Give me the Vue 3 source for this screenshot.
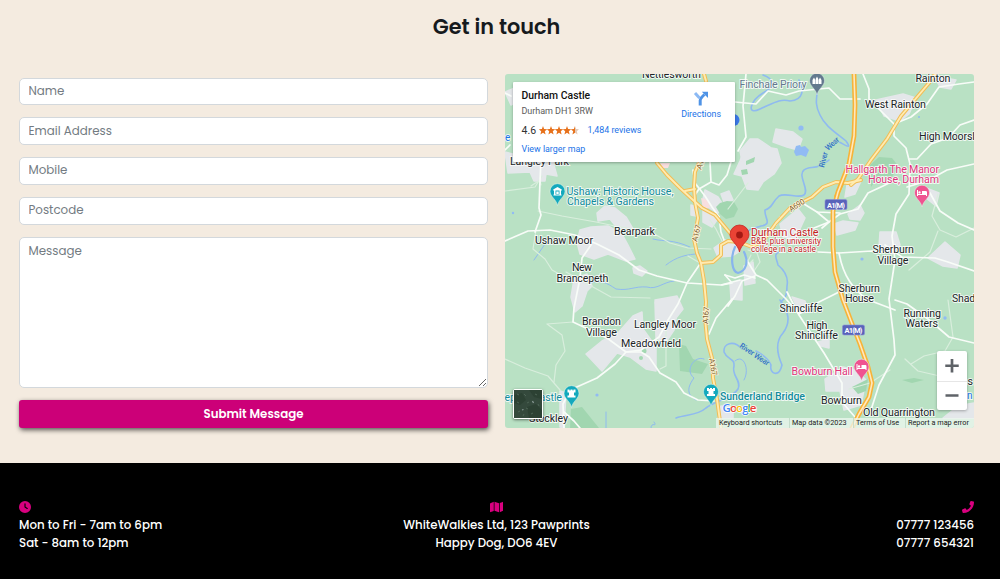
<script setup>
const fields = ['Name', 'Email Address', 'Mobile', 'Postcode']

const towns = [
  '505,152 520,156 552,158 557,176 546,174 545,181 534,181 530,172 508,173',
  '580,230 591,227 608,226 622,234 628,245 635,259 626,261 608,254 594,259 580,254 577,242',
  '597,213 605,206 615,208 626,217 633,229 618,229 610,219 598,221',
  '633,268 640,266 647,271 642,276 634,273',
  '574,279 587,274 592,286 587,291 582,306 575,312 571,297',
  '586,354 602,341 618,333 633,316 642,312 643,329 656,347 656,371 646,369 630,357 617,353 602,371',
  '655,302 670,300 677,313 674,330 666,342 656,338',
  '655,300 677,296 683,309 672,323 658,319',
  '703,210 712,212 719,217 712,227 703,222',
  '705,190 718,197 725,208 718,213 708,207 703,199',
  '721,194 729,191 733,200 724,202',
  '714,248 725,240 737,246 740,251 732,256 718,257',
  '744,150 761,146 777,149 781,163 774,174 763,182 758,190 747,189 742,176 734,174 740,161',
  '740,151 750,139 758,139 770,147 770,158 758,166 743,166',
  '776,129 793,132 802,139 798,150 787,147 773,142',
  '780,224 798,209 805,218 799,231 796,240 783,237',
  '834,224 843,221 858,223 855,230 837,235',
  '848,214 860,205 864,213 860,220 850,219',
  '847,185 861,181 855,194 845,197',
  '876,100 903,94 916,98 909,114 900,121 884,116',
  '880,232 896,232 900,245 892,254 879,247',
  '928,258 945,242 960,255 957,268 943,266',
  '934,76 956,80 951,89 940,87',
  '926,188 939,193 936,206 926,198',
  '744,266 753,262 755,283 745,285',
  '730,284 742,280 742,300 731,299',
  '792,297 805,301 809,312 800,313',
  '818,342 829,339 829,348 821,346',
  '825,379 843,367 856,370 866,380 861,405 844,410 840,391 826,391',
  '721,406 733,407 733,418 718,418',
  '560,391 566,393 564,428 560,427',
  '943,418 958,406 974,403 974,418',
  '505,92 517,87 525,96 511,105',
  '691,205 696,207 696,216 691,215',
]

const pinkAreas = ['701,198 708,200 710,208 703,209', '660,163 670,163 668,168 663,168']

const parks = [
  '720,203 727,201 734,202 738,209 734,217 726,219 720,214 716,207',
  '870,165 879,157 892,158 899,167 891,178 879,176 871,187',
  '571,409 582,407 599,428 570,428',
  '679,344 686,346 693,359 708,364 702,374 680,371',
  '902,380 914,378 924,380 912,383',
  '852,387 868,379 866,391 858,394',
  '746,161 755,157 754,162 746,165',
  '741,170 747,169 748,174 742,175',
]

const streams = [
  'M763,75C774,79 776,86 763,93C750,101 746,116 760,109C772,104 780,98 790,101C804,100 804,89 799,80',
  'M818,86C817,98 814,103 820,115C825,126 835,132 846,141C853,151 844,144 839,142',
  'M829,160C817,171 810,165 804,170C797,175 810,190 804,195C798,199 786,192 779,196C771,203 773,208 765,210C764,218 773,224 761,226C756,228 750,228 747,232',
  'M779,252C773,254 777,260 778,265C784,270 789,276 787,286C787,294 786,298 781,302',
  'M780,300C789,312 791,322 783,333C774,343 778,356 782,365C779,378 769,374 771,365C768,357 761,354 756,351',
  'M742,349C733,339 723,344 724,352C727,360 735,358 734,366C731,376 742,380 738,389C733,398 715,401 706,408C697,416 686,414 676,418',
  'M704,359C695,355 684,370 694,378C685,390 689,396 696,400',
  'M651,428C651,421 658,428 654,422M606,428V412',
  'M590,283C600,279 607,283 616,289C630,291 634,286 647,287C657,290 663,282 674,281',
  'M653,239C665,242 672,239 690,247M666,265C676,257 687,254 699,254',
  'M534,260L545,244M735,361C744,353 750,370 744,380',
]

const lanes = [
  'M505,191L535,187L542,176M531,186L540,180L541,185M538,211L562,216L596,222L615,226L651,232L670,243L688,248L711,249',
  'M536,230L533,249L545,259L552,270L570,280M566,272L611,297L650,298',
  'M547,324L573,322M547,324L562,335L565,351L556,365L554,382',
  'M505,359L525,368L548,376L560,390M666,322L666,366L660,369M710,220L716,229L722,241M728,209L748,183',
  'M938,194L932,216L940,230L956,237L974,228M938,231L930,252L909,270M948,300L950,315L953,337L945,351L924,356L911,364',
  'M849,389L870,383L890,370M905,359L918,371L944,377L974,385',
  'M748,250L757,253L760,262L754,271L747,263L751,255M753,260L745,268M700,263L688,256',
]

const roads = [
  'M505,93L511,96M505,150L510,145M541,160L540,181L539,208L541,215L535,232',
  'M505,241L528,231L550,230L575,235L597,244L619,255L639,270L657,276L687,283L721,285L740,280',
  'M591,245L582,258L580,278L574,308L573,322L607,338L626,352L641,352L649,357L660,373L676,382L684,393L698,400L714,401',
  'M700,264L687,283L678,304L668,320L659,337L641,350L626,352L615,364L597,378L570,390L563,404L564,428',
  'M564,412L574,421L580,428M732,299L716,318L709,334',
  'M710,162L711,182L699,189L693,198M711,182L719,185L727,175L731,162',
  'M693,170L695,183L705,196L712,207L719,217',
  'M719,217L721,232L724,240M755,278L744,275L735,278L725,275',
  'M746,74L743,106L746,137L738,151M735,102L756,104L768,91L786,95L799,91L829,88L840,99L860,99',
  'M863,74L869,89L869,99L884,114L894,124L894,136L906,148L910,164L909,194L896,214L892,236L895,260L889,299L894,340L895,355L879,385L869,416',
  'M894,124L911,117L927,104L939,87L959,84L974,82M909,159L917,159L931,144L948,138L960,125L974,120M907,187L927,181L947,170L974,164',
  'M930,193L940,211L958,223L974,230M885,245L902,257L935,258L948,262L974,271M818,252L839,253L872,251L885,252',
  'M746,259L756,275L767,280L786,299L799,314L813,305L839,292M839,253C844,280 855,289 866,299L895,310',
  'M787,292L799,315L824,353L842,383L842,402L855,417M814,228L829,222L840,214L858,209L868,193L883,186L891,182',
  'M804,204L817,212L840,213M895,300L907,304L928,319L949,337L974,343',
  'M755,276L742,281L735,296L728,306M725,275L732,283L722,285M780,217L776,225M817,212L829,222L822,228',
]

const yellowRoads = [
  'M657,163L667,175L680,188L693,200L702,208L715,215L730,233L738,241',
  'M701,158L695,172L694,187L695,202L698,218L694,239L697,253L701,263L704,281L706,302L705,318L707,339L712,358L713,378L717,399L719,414L721,428',
  'M701,263L713,262L721,255L721,245L728,241L739,242L752,247L764,240L776,223L790,208L812,197L823,187L836,182L848,183L861,180',
  'M704,74L706,81M685,191L695,189M842,184L836,196',
  'M935,74L929,83L901,116L887,139L871,160L858,179L851,185',
]

const motorway = 'M854,74L855,105L854,136L849,164L838,192L833,211L833,247L835,272L843,300L851,321L860,344L868,367L872,383L869,397L859,414L852,428'

const labels = [
  { t: 'Nettlesworth', x: 642, y: 78, w: 59 },
  { t: 'Langley Park', x: 510, y: 165, w: 59 },
  { t: 'Rainton', x: 915.5, y: 82, w: 35 },
  { t: 'West Rainton', x: 865, y: 108, w: 61 },
  { t: 'High Moorsley', x: 919, y: 140, w: 66 },
  { t: 'Bearpark', x: 614, y: 235, w: 41 },
  { t: 'Ushaw Moor', x: 535, y: 244, w: 58 },
  { t: 'New', x: 572, y: 271, w: 20 },
  { t: 'Brancepeth', x: 556.5, y: 282, w: 52 },
  { t: 'Brandon', x: 582, y: 325, w: 39 },
  { t: 'Village', x: 586, y: 335.5, w: 31 },
  { t: 'Langley Moor', x: 634, y: 328, w: 62 },
  { t: 'Meadowfield', x: 621, y: 347, w: 60 },
  { t: 'Sherburn', x: 872.5, y: 253, w: 41.5 },
  { t: 'Village', x: 877.5, y: 263.5, w: 31 },
  { t: 'Sherburn', x: 838.5, y: 291.5, w: 41.5 },
  { t: 'House', x: 845, y: 301.5, w: 29 },
  { t: 'Shadforth', x: 952, y: 301.5, w: 45 },
  { t: 'Shincliffe', x: 779.5, y: 312, w: 43 },
  { t: 'High', x: 806.5, y: 328.5, w: 21 },
  { t: 'Shincliffe', x: 795, y: 339, w: 43 },
  { t: 'Running', x: 903.5, y: 317, w: 37.5 },
  { t: 'Waters', x: 905.5, y: 327, w: 32.5 },
  { t: 'Bowburn', x: 821, y: 403.5, w: 41 },
  { t: 'Old Quarrington', x: 863, y: 416, w: 72 },
  { t: 'Stockley', x: 529, y: 422, w: 39 },
  { t: 'Cass', x: 949, y: 385, w: 24 },
  { t: 'Finchale Priory', x: 739.5, y: 87.5, w: 67, c: 'grey' },
  { t: 'Ushaw: Historic House,', x: 566.5, y: 194.5, w: 107, c: 'teal' },
  { t: 'Chapels & Gardens', x: 567, y: 204.5, w: 87, c: 'teal' },
  { t: 'Brancepeth Castle', x: 478, y: 401, w: 84, c: 'teal' },
  { t: 'Sunderland Bridge', x: 720, y: 400, w: 85, c: 'teal strong' },
  { t: 'Hallgarth The Manor', x: 845.5, y: 173, w: 93.5, c: 'pink' },
  { t: 'House, Durham', x: 868, y: 183, w: 71, c: 'pink' },
  { t: 'Bowburn Hall', x: 791.5, y: 374.5, w: 61, c: 'pink' },
  { t: 'Durham Castle', x: 751, y: 235.5, w: 67.5, c: 'red' },
  { t: 'B&B, plus university', x: 751, y: 243.5, w: 70, c: 'red small' },
  { t: 'college in a castle', x: 751, y: 251.5, w: 65, c: 'red small' },
]

const pins = [
  { x: 817, y: 81, color: '#63798e', icon: 'priory' },
  { x: 557.5, y: 191.5, color: '#13a9bd', icon: 'museum' },
  { x: 571.5, y: 393.5, color: '#13a9bd', icon: 'tower' },
  { x: 711, y: 392, color: '#13a9bd', icon: 'tower' },
  { x: 922, y: 193, color: '#ef5390', icon: 'bed' },
  { x: 861.5, y: 367, color: '#ef5390', icon: 'bed' },
]

const glyphs = {
  priory: 'M-4.5,3V-1L-3,-3.500L-1.700,-1V3ZM1.700,3V-1L3,-3.500L4.500,-1V3ZM-1.300,3V-2L0,-4.500L1.300,-2V3Z',
  museum: 'M-4.3,-2L0,-4.5L4.3,-2V-1H-4.3ZM-3.5,-1H-2V3H-3.5ZM2,-1H3.5V3H2ZM-4,3H4V4H-4ZM-1.2,0H1.2V2.4H-1.2Z',
  tower: 'M-4,-4H-2V-3H-1V-4H1V-3H2V-4H4V-1H2.5V2H4V4H-4V2H-2.5V-1H-4Z',
  bed: 'M-5,-3H-4V1H0V-2H4C5,-2 5,-1 5,0V3H4V2H-4V3H-5ZM-2.5,-1.8A1.2,1.2 0 1 1-2.5,.6A1.2,1.2 0 1 1-2.5,-1.8Z',
}

const shields = [{ x: 836, y: 204.5 }, { x: 853.5, y: 330 }]

const google = [['G', '#4285f4'], ['o', '#ea4335'], ['o', '#fbbc05'], ['g', '#4285f4'], ['l', '#34a853'], ['e', '#ea4335']]
</script>

<template>
  <div class="page">
    <main class="contact">
      <h2>Get in touch</h2>
      <div class="columns">
        <form class="form" @submit.prevent>
          <input v-for="f in fields" :key="f" type="text" :placeholder="f" />
          <textarea placeholder="Message"></textarea>
          <button type="submit">Submit Message</button>
        </form>

        <div class="map">
          <svg class="canvas" viewBox="505 74 469 354">
            <rect x="505" y="74" width="469" height="354" fill="#b9e1c4" />
            <polygon v-for="(p, i) in towns" :key="'t' + i" :points="p" fill="#e4e7ea" stroke="#e4e7ea" stroke-width="1.5" stroke-linejoin="round" />
            <polygon v-for="(p, i) in pinkAreas" :key="'k' + i" :points="p" fill="#f8dfdf" />
            <polygon v-for="(p, i) in parks" :key="'p' + i" :points="p" fill="#a1d6b0" />
            <g fill="#91bbf3">
              <path d="M796,146l4,-1 1,2 4,-1 4,4 -3,7 -5,-2 -5,1 -2,-4z" />
              <circle cx="801" cy="128" r="2.6" /><circle cx="733.5" cy="120" r="6" fill="#3b78e7" />
              <circle cx="862" cy="259" r="1.6" /><circle cx="513" cy="213" r="1.2" />
              <circle cx="945" cy="318" r="1.7" /><circle cx="597" cy="395" r="1.6" /><circle cx="919" cy="117" r="1" />
            </g>
            <g fill="#a3d8b2">
              <circle cx="644" cy="351" r="2.5" /><circle cx="641" cy="358" r="2" />
            </g>
            <g fill="none" stroke-linejoin="round" stroke-linecap="round">
              <path v-for="(p, i) in streams" :key="'s' + i" :d="p" stroke="#8fbaf0" :stroke-width="i < 6 ? 1.6 : 1" />
              <path v-for="(p, i) in lanes" :key="'l' + i" :d="p" stroke="#d9eedd" stroke-width="1.2" />
              <path v-for="(p, i) in roads" :key="'r' + i" :d="p" stroke="#f8fcf8" stroke-width="1.7" />
              <path v-for="(p, i) in yellowRoads" :key="'y' + i" :d="p" stroke="#f1bd55" stroke-width="3.9" />
              <path v-for="(p, i) in yellowRoads" :key="'z' + i" :d="p" stroke="#ffebb0" stroke-width="1.9" />
              <path :d="motorway" stroke="#f7b338" stroke-width="4.8" />
              <path :d="motorway" stroke="#ffe8bd" stroke-width="1.6" />
              <path d="M735,247C730,258 732,272 738,273C746,271 749,262 744,252" stroke="#88b4ed" stroke-width="2.2" />
            </g>
            <g class="road-name">
              <text transform="translate(697 242) rotate(-76)" textLength="17">A167</text>
              <text transform="translate(701 170) rotate(-68)" textLength="18">A167</text>
              <text transform="translate(708 324) rotate(-86)" textLength="17">A167</text>
              <text transform="translate(709 359) rotate(80)" textLength="17">A167</text>
              <text transform="translate(791 212) rotate(-32)" textLength="17">A690</text>
            </g>
            <g class="river-name">
              <text transform="translate(824 168) rotate(-76)" textLength="16">River</text>
              <text transform="translate(828 151) rotate(-42)" textLength="16">Wear</text>
              <text transform="translate(739 347) rotate(34)" textLength="34">River Wear</text>
            </g>
            <g v-for="s in shields" :key="s.y" :transform="`translate(${s.x} ${s.y})`">
              <rect x="-11" y="-5" width="22" height="10" rx="1.5" fill="#5963ba" stroke="#8990d8" stroke-width=".6" />
              <text class="shield" y="3" textLength="18" text-anchor="middle">A1(M)</text>
            </g>
            <g v-for="p in pins" :key="p.x" :transform="`translate(${p.x} ${p.y})`">
              <path d="M0,14C-1,8 -7.5,5 -7.5,-.3A7.5,7.5 0 0 1 7.5,-.3C7.5,5 1,8 0,14Z" :fill="p.color" stroke="#e5f5ea" stroke-width=".5" />
              <path :d="glyphs[p.icon]" fill="#fff" fill-rule="evenodd" />
            </g>
            <text v-for="(l, i) in labels" :key="'n' + i" class="label" :class="l.c" :x="l.x" :y="l.y" :textLength="l.w">{{ l.t }}</text>
            <text class="label station" x="505" y="141">e</text>
            <text class="label station" x="967" y="399">n</text>
            <path d="M739.5,252C738,244 730,241 730,234.5A9.5,9.5 0 0 1 749,234.5C749,241 741,244 739.5,252Z" fill="#ea4335" stroke="#c5221f" stroke-width=".8" />
            <circle cx="739.5" cy="235" r="3.4" fill="#a31913" />
            <text class="google" x="722.5" y="412" textLength="34"><tspan v-for="(g, i) in google" :key="i" :fill="g[1]">{{ g[0] }}</tspan></text>
          </svg>

          <section class="place">
            <div class="details">
              <strong>Durham Castle</strong>
              <span class="address">Durham DH1 3RW</span>
              <div class="rating">
                <span class="score">4.6</span>
                <svg class="stars" width="40" height="9" viewBox="0 0 40 9">
                  <g fill="#e7711b">
                    <path v-for="i in 4" :key="i" :transform="`translate(${(i - 1) * 8} 0)`" d="M4,0L5.1,3L8.200,3.2L5.8,5.3L6.6,8.500L4,6.7L1.4,8.500L2.2,5.3L-.2,3.2L2.9,3Z" />
                    <path d="M36,0V6.700L33.400,8.500L34.2,5.3L31.800,3.2L34.9,3Z" />
                  </g>
                  <path d="M36,0L37.1,3L40,3.2L37.8,5.3L38.6,8.500L36,6.7Z" fill="#e4c9b6" />
                </svg>
                <a>1,484 reviews</a>
              </div>
              <a>View larger map</a>
            </div>
            <div class="directions">
              <svg width="16" height="15" viewBox="0 0 16 15">
                <path d="M2,2L6.5,7" stroke="#8cb9f4" stroke-width="3" fill="none" />
                <path d="M7.2,14.5V9.5C7.2,7.5 8,6.7 11.5,3.5" stroke="#4f93e6" stroke-width="3" fill="none" />
                <path d="M8.8,.7H15V7Z" fill="#4f93e6" />
              </svg>
              <a>Directions</a>
            </div>
          </section>

          <div class="satellite">
            <svg viewBox="0 0 28 28">
              <rect width="28" height="28" fill="#34493c" />
              <path d="M0,5L8,3L12,10L6,15L0,13ZM15,0L28,0V9L20,7ZM13,17L22,14L28,20V28H15Z" fill="#2c4133" />
              <path d="M3,4L5,5M10,4L12,6M3,12L5,13M13,13L15,12M4,22L6,21M17,24L19,23M21,4L23,5M9,26L10,24M24,14L25,16M12,18L14,19" stroke="#4d6455" stroke-width="1" />
              <path d="M18.500,11L19.500,13M8,20L9.500,19.500" stroke="#8b9b98" stroke-width="1.200" fill="none" />
            </svg>
          </div>

          <div class="zoom">
            <svg viewBox="0 0 14 14"><path d="M7,.5V13.5M.5,7H13.5" /></svg>
            <svg viewBox="0 0 14 14"><path d="M.5,7H13.5" /></svg>
          </div>

          <div class="legal">
            <span class="l1">Keyboard shortcuts</span><span class="l2">Map data ©2023</span><span class="l3">Terms of Use</span><span class="l4">Report a map error</span>
          </div>
        </div>
      </div>
    </main>

    <footer>
      <div class="info hours">
        <svg viewBox="0 0 512 512" width="12" height="12"><path d="M256 0a256 256 0 1 1 0 512A256 256 0 1 1 256 0zM232 120V256c0 8 4 15.500 10.700 20l96 64c11 7.400 25.900 4.400 33.300-6.700s4.400-25.900-6.700-33.300L280 243.200V120c0-13.300-10.700-24-24-24s-24 10.700-24 24z" /></svg>
        <span>Mon to Fri - 7am to 6pm</span>
        <span>Sat - 8am to 12pm</span>
      </div>
      <div class="info where">
        <svg viewBox="0 0 576 512" width="13.500" height="12"><path d="M384 476.100L192 421.200V35.900L384 90.800V476.100zm32-1.200V88.400L543.100 37.500c15.800-6.300 32.900 5.300 32.900 22.300V394.600c0 9.800-6 18.600-15.100 22.300L416 474.800zM15.100 95.100L160 37.200V423.600L32.900 474.500C17.100 480.800 0 469.200 0 452.200V117.400c0-9.800 6-18.600 15.100-22.300z" /></svg>
        <span>WhiteWalkies Ltd, 123 Pawprints</span>
        <span>Happy Dog, DO6 4EV</span>
      </div>
      <div class="info phone">
        <svg viewBox="0 0 512 512" width="12" height="12"><path d="M493.400 24.600l-104-24c-11.300-2.600-22.900 3.300-27.500 13.900l-48 112c-4.200 9.800-1.400 21.300 6.900 28l60.600 49.600c-36 76.700-98.900 140.500-177.200 177.200l-49.600-60.600c-6.800-8.300-18.200-11.100-28-6.900l-112 48C3.900 366.500-2 378.100.6 389.400l24 104C27.100 504.200 36.700 512 48 512c256.100 0 464-207.500 464-464 0-11.200-7.700-20.900-18.600-23.400z" /></svg>
        <span>07777 123456</span>
        <span>07777 654321</span>
      </div>
    </footer>
  </div>
</template>

<style>
body { margin: 0; }
</style>

<style scoped>
.page {
  width: 1000px;
  height: 579px;
  overflow: hidden;
  background: #f4ebe0;
  font-family: Poppins, Inter, "Liberation Sans", sans-serif;
}
.contact { box-sizing: border-box; height: 463px; padding: 12px 26px 0 19px; }
h2 {
  margin: 0;
  height: 62px;
  text-align: center;
  color: #161a1d;
  font-size: 20.800px;
  line-height: 29px;
  font-weight: 600;
}
.columns { display: flex; gap: 17px; }
.form { display: flex; flex-direction: column; width: 469px; padding-top: 3.500px; gap: 12px; }
input, textarea {
  box-sizing: border-box;
  width: 100%;
  border: 1px solid #d3d8dc;
  border-radius: 5px;
  background: #fff;
  padding: 0 8.500px;
  font: 11.850px/18px Poppins, Inter, "Liberation Sans", sans-serif;
  outline: 0;
}
input { height: 27.800px; flex: none; }
textarea { height: 151.500px; padding-top: 4px; display: block; margin: 0; }
input::placeholder, textarea::placeholder { color: #737b82; opacity: 1; }
button {
  height: 28px;
  padding: 0;
  border: 0;
  border-radius: 3px;
  background: #cc0078;
  color: #fff;
  font: 600 11.800px/28px Poppins, Inter, "Liberation Sans", sans-serif;
  box-shadow: 1px 2px 5px rgba(0, 0, 0, .65);
}
.map {
  position: relative;
  width: 469px;
  height: 354px;
  border-radius: 3px;
  overflow: hidden;
  font-family: Roboto, sans-serif;
}
.canvas { display: block; width: 469px; height: 354px; }
.label { font-size: 10.700px; fill: #202426; stroke: #fff; stroke-opacity: .8; stroke-width: 1.800px; paint-order: stroke; }
.label.grey { fill: #63798e; }
.label.teal { fill: #128b9b; }
.label.strong { font-weight: 500; }
.label.pink { fill: #e0357c; }
.label.red { fill: #c5221f; }
.label.small { font-size: 8.400px; }
.label.station { fill: #1a73e8; font-size: 10px; }
.road-name { font-size: 7.800px; fill: #7b5d27; stroke: #fff4dc; stroke-width: 1.500px; paint-order: stroke; }
.river-name { font-size: 7.800px; font-weight: 500; fill: #3472c8; stroke: #b9e1c4; stroke-width: 1px; paint-order: stroke; }
.shield { fill: #fff; font-size: 7.500px; font-weight: 700; }
.google { font: 600 11.500px "Open Sans", sans-serif; stroke: #fff; stroke-width: 1.500px; paint-order: stroke; }
.place {
  position: absolute;
  left: 8px;
  top: 8px;
  box-sizing: border-box;
  width: 222px;
  height: 80px;
  padding: 7px 14px 0 8.500px;
  display: flex;
  justify-content: space-between;
  background: #fff;
  border-radius: 1px;
  box-shadow: 0 1px 3px rgba(0, 0, 0, .3);
}
.details { display: flex; flex-direction: column; white-space: nowrap; font-size: 9px; }
.details strong { font-size: 10.400px; line-height: 13px; font-weight: 500; color: #111; }
.address { margin-top: 3px; line-height: 13px; color: #5b5b5b; letter-spacing: -.04px; }
.rating { display: flex; align-items: center; height: 13px; margin-top: 6px; }
.score { font-size: 10.500px; color: #333; width: 17px; }
.stars { margin-right: 9px; overflow: visible; }
.place a { color: #1a73e8; font-size: 8.900px; line-height: 13px; }
.details > a { margin-top: 6px; }
.directions { display: flex; flex-direction: column; align-items: center; padding-top: 2px; }
.directions a { margin-top: 2px; }
.satellite {
  position: absolute;
  left: 8px;
  top: 315px;
  width: 28px;
  height: 28px;
  border: 1.500px solid #fff;
  border-radius: 2px;
  box-shadow: 0 1px 3px rgba(0, 0, 0, .5);
}
.satellite svg { display: block; }
.zoom {
  position: absolute;
  left: 432px;
  top: 277px;
  width: 30px;
  height: 59px;
  display: flex;
  flex-direction: column;
  background: #fff;
  border-radius: 2px;
  box-shadow: 0 1px 3px rgba(0, 0, 0, .3);
}
.zoom svg { box-sizing: border-box; width: 30px; height: 29.500px; padding: 7.500px 0; stroke: #5f6368; stroke-width: 2.600; }
.zoom svg + svg { border-top: 1px solid #e6e6e6; padding: 6.500px 0 8px; }
.legal {
  position: absolute;
  right: 0;
  bottom: 0;
  width: 258px;
  height: 10px;
  display: flex;
  background: rgba(239, 247, 240, .75);
  color: #222;
  font-size: 7.300px;
  line-height: 10px;
  white-space: nowrap;
}
.legal span { box-sizing: border-box; padding-left: 3px; }
.legal span + span { border-left: 1px solid rgba(190, 215, 196, .8); padding-left: 2px; }
.l1 { width: 73px; }
.l2 { width: 64px; }
.l3 { width: 52px; }
.l4 { width: 69px; }
footer {
  box-sizing: border-box;
  height: 116px;
  padding: 38px 26px 0 19px;
  display: grid;
  grid-template-columns: 1fr 1fr 1fr;
  background: #000;
  color: #fff;
  font-size: 11.800px;
  line-height: 18px;
  font-weight: 500;
}
.info { display: flex; flex-direction: column; align-items: flex-start; white-space: nowrap; }
.info svg { display: block; fill: #d9007f; margin-bottom: 3px; }
.where { align-items: center; }
.phone { align-items: flex-end; }
</style>
